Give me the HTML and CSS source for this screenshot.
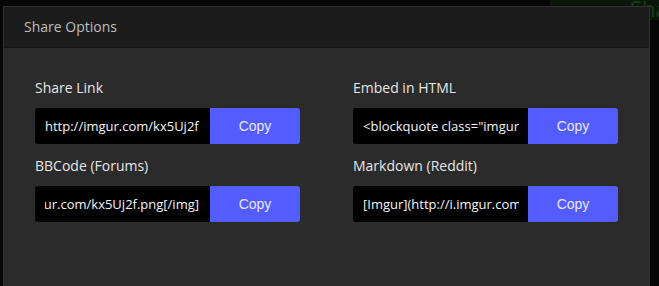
FILE: index.html
```html
<!DOCTYPE html>
<html lang="en">
<head>
  <meta charset="UTF-8" />
  <meta name="viewport" content="width=device-width, initial-scale=1.0"/>
  <title>Share Options</title>
  <link rel="stylesheet" href="styles.css">
</head>
<body>
  <!-- page behind the dialog -->
  <div class="page">
    <div class="page-tab">Share</div>
  </div>

  <div class="modal">
    <div class="modal-header">Share Options</div>
    <div class="modal-body">
      <div class="field">
        <div class="field-label">Share Link</div>
        <div class="copy-row">
          <div class="copy-input"><div class="copy-text">http://imgur.com/kx5Uj2f</div></div>
          <button class="copy-btn">Copy</button>
        </div>
      </div>
      <div class="field">
        <div class="field-label">Embed in HTML</div>
        <div class="copy-row">
          <div class="copy-input"><div class="copy-text">&lt;blockquote class="imgur-embed-pub" lang="en" data-id="kx5Uj2f"&gt;</div></div>
          <button class="copy-btn">Copy</button>
        </div>
      </div>
      <div class="field">
        <div class="field-label">BBCode (Forums)</div>
        <div class="copy-row">
          <div class="copy-input"><div class="copy-text scrolled"><span>[img]http://i.imgur.com/kx5Uj2f.png[/img]</span></div></div>
          <button class="copy-btn">Copy</button>
        </div>
      </div>
      <div class="field">
        <div class="field-label">Markdown (Reddit)</div>
        <div class="copy-row">
          <div class="copy-input"><div class="copy-text">[Imgur](http://i.imgur.com/kx5Uj2f.png)</div></div>
          <button class="copy-btn">Copy</button>
        </div>
      </div>
    </div>
  </div>
</body>
</html>
```

FILE: styles.css
```css
html, body {
  margin:0;
  height:100%;
  overflow:hidden;
}
body {
  background:#060606;
  font-family:"Open Sans", sans-serif;
}
.page {
  position:relative;
  height:100%;
}
.page-tab {
  position:absolute;
  top:0;
  left:550px;
  width:109px;
  height:20px;
  background:#0a170a;
  color:#1d3a1d;
  font-size:22px;
  line-height:16px;
  padding-left:80px;
  box-sizing:border-box;
  overflow:hidden;
}

/* dialog */
.modal {
  position:absolute;
  top:6px;
  left:3px;
  width:647px;
  bottom:-40px;
  background:#2b2b2b;
  border:1px solid #303030;
  box-sizing:border-box;
}
.modal-header {
  height:40px;
  background:#1c1c1c;
  border-bottom:1px solid #151515;
  color:#bdbdbd;
  font-size:14px;
  line-height:39px;
  padding-left:20px;
}
.modal-body {
  display:grid;
  grid-template-columns:265px 265px;
  column-gap:53px;
  row-gap:12px;
  padding:30px 31px 0;
}
.field-label {
  color:#e6e6e6;
  font-size:14px;
  line-height:19px;
  margin-bottom:11px;
}
.copy-row {
  display:flex;
  height:36px;
  border-radius:3px;
  overflow:hidden;
}
.copy-input {
  flex:1;
  min-width:0;
  display:flex;
  align-items:center;
  background:#000;
  padding:0 9px 0 10px;
}
.copy-text {
  flex:1;
  min-width:0;
  display:flex;
  color:#f4f4f4;
  font-size:13px;
  white-space:nowrap;
  overflow:hidden;
}
.copy-text.scrolled {
  justify-content:flex-end;
}
.copy-text.scrolled span {
  flex-shrink:0;
  padding-right:2px;
}
.copy-btn {
  width:90px;
  border:none;
  background:#535dff;
  color:#e6e8ff;
  font-family:"Liberation Sans", Arial, sans-serif;
  font-size:14px;
  padding:0;
  cursor:pointer;
}
```
